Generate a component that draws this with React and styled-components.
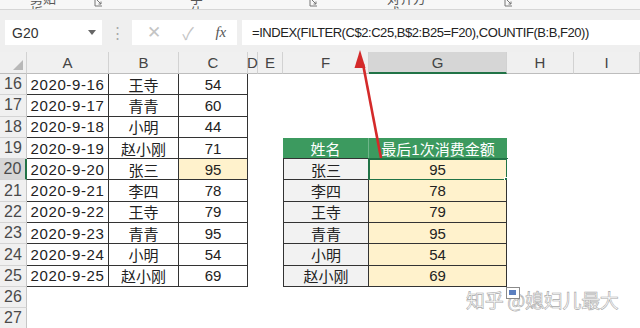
import React from 'react';
import styled, { createGlobalStyle } from 'styled-components';

const GlobalStyle = createGlobalStyle`
  html, body { margin: 0; padding: 0; background: #fff; }
  body { font-family: "Liberation Sans", "Noto Sans CJK SC", sans-serif; }
`;

const COLS = [27, 82, 70, 69, 10, 25, 86, 138, 67, 66];
const LETTERS = ['', 'A', 'B', 'C', 'D', 'E', 'F', 'G', 'H', 'I'];
const LINE = '1.5px solid #333';

const ROWS = [
  { n: 16, a: '2020-9-16', b: '王寺', c: 54 },
  { n: 17, a: '2020-9-17', b: '青青', c: 60 },
  { n: 18, a: '2020-9-18', b: '小明', c: 44 },
  { n: 19, a: '2020-9-19', b: '赵小刚', c: 71, f: '姓名', g: '最后1次消费金额', head: true },
  { n: 20, a: '2020-9-20', b: '张三', c: 95, f: '张三', g: 95, active: true },
  { n: 21, a: '2020-9-21', b: '李四', c: 78, f: '李四', g: 78 },
  { n: 22, a: '2020-9-22', b: '王寺', c: 79, f: '王寺', g: 79 },
  { n: 23, a: '2020-9-23', b: '青青', c: 95, f: '青青', g: 95 },
  { n: 24, a: '2020-9-24', b: '小明', c: 54, f: '小明', g: 54 },
  { n: 25, a: '2020-9-25', b: '赵小刚', c: 69, f: '赵小刚', g: 69 },
  { n: 26 },
  { n: 27 },
];

const Page = styled.div`
  position: relative;
  width: 640px;
  height: 328px;
  overflow: hidden;
  background: #fff;
`;

const Ribbon = styled.div`
  display: flex;
  height: 9px;
  overflow: hidden;
  background: #f7f7f7;
  border-bottom: 1px solid #d6d6d6;
`;

const RibbonGroup = styled.div`
  display: flex;
  align-items: flex-start;
  width: ${p => p.$w}px;
  padding-left: ${p => p.$pad}px;
  box-sizing: border-box;
  gap: ${p => p.$gap}px;
`;

const GroupLabel = styled.span`
  margin-top: -8px;
  font-size: 13px;
  line-height: 14px;
  color: #555;
`;

const Launcher = styled.svg`
  margin-top: -3px;
  flex: none;
`;

const FormulaBar = styled.div`
  display: flex;
  align-items: center;
  height: 42px;
  padding: 3px 0 0 5px;
  box-sizing: border-box;
  background: #efefef;
`;

const NameBox = styled.div`
  display: flex;
  align-items: center;
  justify-content: space-between;
  width: 97px;
  height: 25px;
  padding: 0 6px 0 7px;
  box-sizing: border-box;
  background: #fff;
  font-size: 14px;
  color: #333;
`;

const Splitter = styled.div`
  width: 30px;
  text-align: center;
  color: #a9a9a9;
  font-size: 15px;
`;

const ButtonBox = styled.div`
  display: flex;
  align-items: center;
  justify-content: space-around;
  width: 105px;
  height: 25px;
  padding-left: 4px;
  box-sizing: border-box;
  background: #fff;
  color: #c4c4c4;
  font-size: 17px;
`;

const Fx = styled.span`
  font-family: "Liberation Serif", serif;
  font-style: italic;
  font-size: 15px;
  color: #555;
`;

const FormulaInput = styled.div`
  flex: 1;
  height: 25px;
  margin-left: 5px;
  padding-left: 10px;
  display: flex;
  align-items: center;
  background: #fff;
  font-size: 13px;
  letter-spacing: -0.45px;
  color: #222;
  white-space: nowrap;
`;

const Sheet = styled.div`
  display: grid;
  grid-template-columns: ${COLS.map(c => c + 'px').join(' ')};
  grid-template-rows: 22px;
  grid-auto-rows: 21.3px;
`;

const ColHead = styled.div`
  display: flex;
  align-items: center;
  justify-content: center;
  box-sizing: border-box;
  background: ${p => (p.$active ? '#d6d6d6' : '#f0f0f0')};
  border-right: 1px solid #d2d2d2;
  border-bottom: ${p => (p.$active ? '2px solid #217346' : '1px solid #bdbdbd')};
  font-size: 15px;
  color: #444;
  position: relative;
`;

const Corner = styled.svg`
  position: absolute;
  right: 3px;
  bottom: 3px;
`;

const RowHead = styled.div`
  display: flex;
  align-items: center;
  justify-content: center;
  box-sizing: border-box;
  background: ${p => (p.$active ? '#d6d6d6' : '#f0f0f0')};
  border-bottom: 1px solid #d4d4d4;
  border-right: ${p => (p.$active ? '2px solid #217346' : '1px solid #c6c6c6')};
  font-size: 16px;
  color: #4a4a4a;
`;

const Cell = styled.div`
  position: relative;
  display: flex;
  align-items: center;
  justify-content: center;
  box-sizing: border-box;
  background: ${p => p.$bg || '#fff'};
  border-right: ${p => (p.$boxed ? LINE : 'none')};
  border-bottom: ${p => (p.$boxed ? LINE : 'none')};
  border-left: ${p => (p.$first ? LINE : 'none')};
  font-size: 15px;
  color: ${p => (p.$head ? '#fff' : '#222')};
  white-space: nowrap;
  letter-spacing: ${p => (p.$date ? '0.6px' : '0')};
`;

const HeadCell = styled(Cell)`
  background: #3c9a5f;
  border-right: ${p => (p.$divider ? '1px solid #6fb68a' : 'none')};
  border-bottom: ${LINE};
`;

const Selection = styled.div`
  position: absolute;
  inset: -1px -2px -2px -1px;
  border: 2px solid #217346;
  pointer-events: none;
`;

const FillHandle = styled.div`
  position: absolute;
  right: -5px;
  bottom: -5px;
  width: 5px;
  height: 5px;
  background: #217346;
  border: 1px solid #fff;
`;

const Arrow = styled.svg`
  position: absolute;
  left: 0;
  top: 0;
  pointer-events: none;
`;

const Watermark = styled.div`
  position: absolute;
  left: 466px;
  top: 288px;
  font-family: "Noto Sans CJK SC", sans-serif;
  font-size: 19px;
  line-height: 24px;
  color: rgba(255, 255, 255, 0.9);
  -webkit-text-stroke: 0.6px #a8a8a8;
  letter-spacing: -0.3px;
  white-space: nowrap;
`;

const PasteIcon = styled.svg`
  position: absolute;
  left: 506px;
  top: 287px;
`;

function LaunchIcon() {
  return (
    <Launcher width="9" height="10" viewBox="0 0 9 10">
      <path d="M1 1v8h7" fill="none" stroke="#777" strokeWidth="1" />
      <path d="M3 3l4 4M7 4.5V7H4.5" fill="none" stroke="#777" strokeWidth="1" />
    </Launcher>
  );
}

function DataRow({ row }) {
  const inLeft = row.a !== undefined;
  const inRight = row.f !== undefined;
  return (
    <>
      <RowHead $active={row.active}>{row.n}</RowHead>
      <Cell $boxed={inLeft} $date>{row.a}</Cell>
      <Cell $boxed={inLeft}>{row.b}</Cell>
      <Cell $boxed={inLeft} $bg={row.active ? '#fff2cc' : undefined}>{row.c}</Cell>
      <Cell />
      <Cell />
      {row.head ? (
        <>
          <HeadCell $head $divider>{row.f}</HeadCell>
          <HeadCell $head>{row.g}</HeadCell>
        </>
      ) : (
        <>
          <Cell $boxed={inRight} $first={inRight} $bg={inRight ? '#f2f2f2' : undefined}>{row.f}</Cell>
          <Cell $boxed={inRight} $bg={inRight ? '#fff2cc' : undefined}>
            {row.g}
            {row.active && (
              <Selection>
                <FillHandle />
              </Selection>
            )}
          </Cell>
        </>
      )}
      <Cell />
      <Cell />
    </>
  );
}

export default function App() {
  return (
    <Page>
      <GlobalStyle />
      <Ribbon>
        <RibbonGroup $w={103} $pad={30} $gap={33}>
          <GroupLabel>剪贴板</GroupLabel>
          <LaunchIcon />
        </RibbonGroup>
        <RibbonGroup $w={215} $pad={87} $gap={95}>
          <GroupLabel>字体</GroupLabel>
          <LaunchIcon />
        </RibbonGroup>
        <RibbonGroup $w={195} $pad={69} $gap={73}>
          <GroupLabel>对齐方式</GroupLabel>
          <LaunchIcon />
        </RibbonGroup>
      </Ribbon>

      <FormulaBar>
        <NameBox>
          <span>G20</span>
          <svg width="8" height="5" viewBox="0 0 8 5">
            <path d="M0 0h8L4 5z" fill="#666" />
          </svg>
        </NameBox>
        <Splitter>⋮</Splitter>
        <ButtonBox>
          <span>✕</span>
          <span>✓</span>
          <Fx>fx</Fx>
        </ButtonBox>
        <FormulaInput>=INDEX(FILTER(C$2:C25,B$2:B25=F20),COUNTIF(B:B,F20))</FormulaInput>
      </FormulaBar>

      <Sheet>
        {LETTERS.map((l, i) => (
          <ColHead key={i} $active={l === 'G'}>
            {i === 0 ? (
              <Corner width="10" height="10" viewBox="0 0 10 10">
                <path d="M10 0v10H0z" fill="#b8b8b8" />
              </Corner>
            ) : (
              l
            )}
          </ColHead>
        ))}
        {ROWS.map(r => (
          <DataRow key={r.n} row={r} />
        ))}
      </Sheet>

      <Arrow width="640" height="328" viewBox="0 0 640 328">
        <line x1="381" y1="158" x2="363" y2="64" stroke="#d42a2a" strokeWidth="2.6" />
        <path d="M360 50l-5.5 18h11z" fill="#d42a2a" />
      </Arrow>

      <Watermark>知乎 @媳妇儿最大</Watermark>
      <PasteIcon width="14" height="12" viewBox="0 0 14 12">
        <rect x="0.5" y="0.5" width="13" height="11" fill="#fff" stroke="#8a8a8a" />
        <rect x="3" y="3" width="7" height="5" fill="#5b7fc0" />
      </PasteIcon>
    </Page>
  );
}
